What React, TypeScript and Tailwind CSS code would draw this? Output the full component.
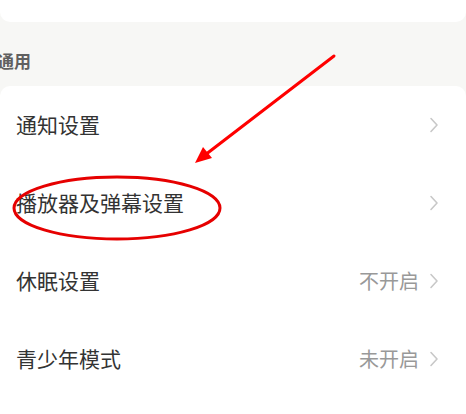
const rows = [
  { label: "通知设置", value: "" },
  { label: "播放器及弹幕设置", value: "" },
  { label: "休眠设置", value: "不开启" },
  { label: "青少年模式", value: "未开启" },
];

function Chevron() {
  return (
    <svg width="10" height="16" viewBox="0 0 10 16" fill="none" className="shrink-0">
      <path d="M2 1.5 L8 8 L2 14.5" stroke="#c8c8c8" strokeWidth="1.6" strokeLinecap="round" strokeLinejoin="round" />
    </svg>
  );
}

export default function App() {
  return (
    <div
      className="relative flex h-[414px] w-[466px] flex-col overflow-hidden bg-[#f7f7f5]"
      style={{ fontFamily: '"Noto Sans CJK SC", "Noto Sans", sans-serif' }}
    >
      <div className="h-[22px] shrink-0 rounded-b-[10px] bg-white" />
      <div className="flex h-[64px] shrink-0 items-center pt-[14px]">
        <span className="-ml-[3px] text-[17px] font-semibold text-[#606060]">通用</span>
      </div>
      <div className="flex-1 rounded-t-[10px] bg-white">
        {rows.map((r) => (
          <div key={r.label} className="flex h-[78px] items-center pl-[16px] pr-[27px]">
            <span className="flex-1 text-[21px] text-[#333]">{r.label}</span>
            {r.value && <span className="mr-[10px] text-[20px] text-[#999]">{r.value}</span>}
            <Chevron />
          </div>
        ))}
      </div>

      {/* red annotation */}
      <svg className="pointer-events-none absolute left-0 top-0" width="466" height="414" viewBox="0 0 466 414">
        <line x1="334" y1="56" x2="205" y2="155" stroke="#ff0000" strokeWidth="3" strokeLinecap="round" />
        <polygon points="195,163 203,147 212,158" fill="#ff0000" />
        <ellipse cx="117" cy="208" rx="103" ry="31" fill="none" stroke="#e60000" strokeWidth="3" />
      </svg>
    </div>
  );
}
